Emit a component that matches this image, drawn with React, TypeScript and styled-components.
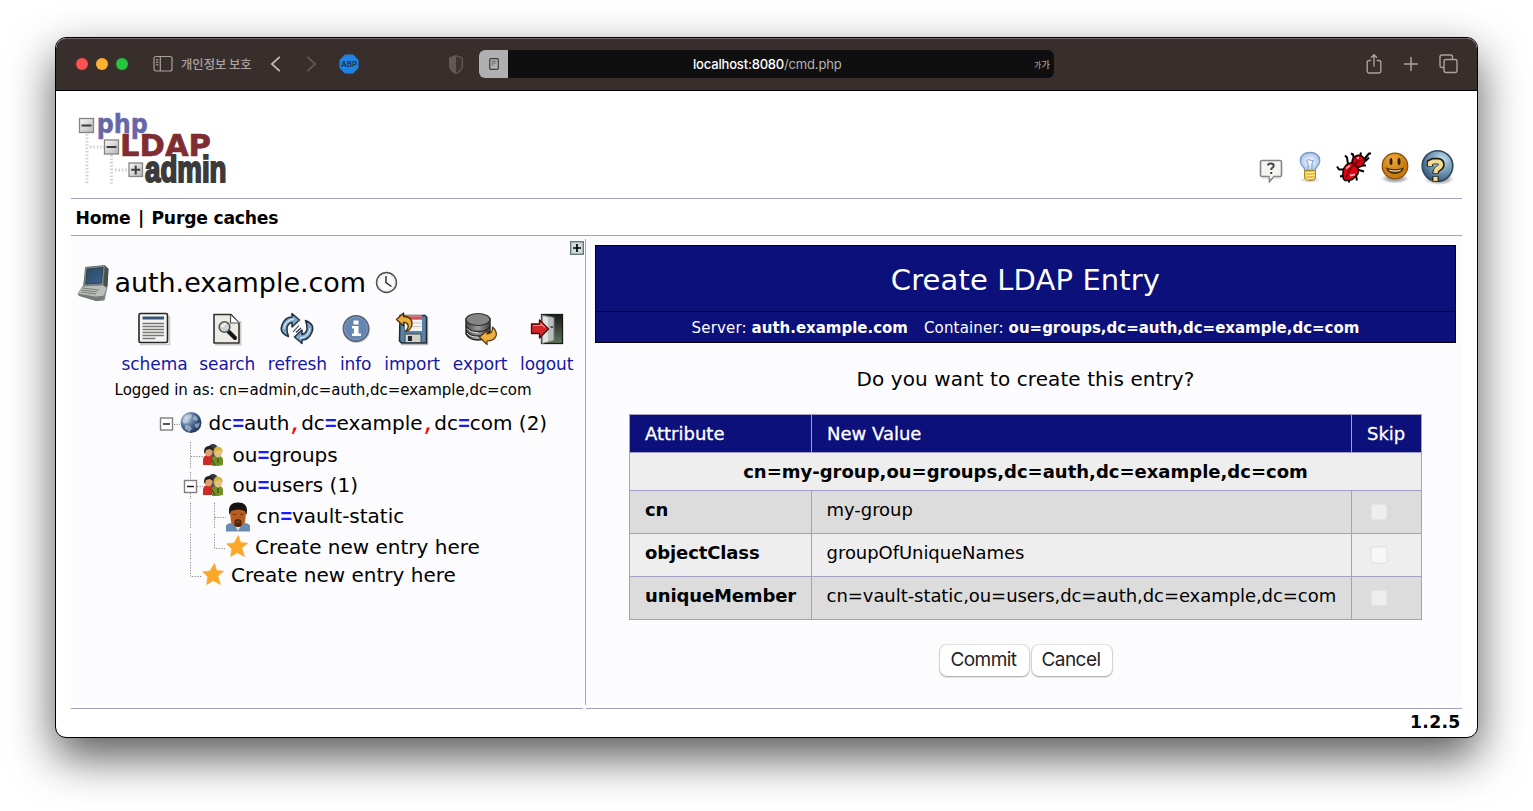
import React from 'react';
import styled, { createGlobalStyle } from 'styled-components';

const GlobalStyle = createGlobalStyle`
  * { box-sizing: border-box; }
  body { margin: 0; background: #fff; overflow: hidden; }
`;

const verdana = `Verdana, 'DejaVu Sans', sans-serif`;
const system = `Inter, 'Noto Sans CJK KR', sans-serif`;
const line = '#a2a0c6';
const navy = '#0c107a';

const Desktop = styled.div`
  height: 811px;
  padding: 37px 55px 0;
  font-family: ${verdana};
  color: #000;
`;

const Window = styled.main`
  width: 1423px;
  height: 701px;
  border: 1px solid #000;
  border-radius: 11px;
  overflow: hidden;
  background: #fff;
  box-shadow: 0 19px 46px rgba(0, 0, 0, 0.66);
`;

/* ---------- browser chrome ---------- */

const TitleBar = styled.header`
  display: flex;
  align-items: center;
  height: 53px;
  padding: 0 19px 0 20px;
  background: #382f2d;
  border-bottom: 1px solid #000;
  box-shadow: inset 0 1px 0 #6f6866;
  border-radius: 10px 10px 0 0;
  font-family: ${system};
`;

const Lights = styled.div`
  display: flex;
  gap: 8px;
  margin-right: 25px;
`;

const Light = styled.span<{ $color: string }>`
  width: 12px;
  height: 12px;
  border-radius: 50%;
  background: ${(p) => p.$color};
`;

const ProfileName = styled.span`
  width: 72px;
  margin: 0 17px 0 8px;
  font: 500 12.3px/18px 'Noto Sans CJK KR', sans-serif;
  color: #aaa2a0;
  white-space: nowrap;
`;

const Glyph = styled.svg<{ $ml?: number }>`
  display: block;
  flex: none;
  margin-left: ${(p) => p.$ml ?? 0}px;
  overflow: visible;
`;

const AddressBar = styled.div`
  display: flex;
  width: 575px;
  height: 28px;
  margin-left: 16px;
  border-radius: 6px;
  overflow: hidden;
  background: #0f0f0f;
`;

const ReaderTab = styled.div`
  display: grid;
  place-items: center;
  width: 29px;
  background: #b1b0b0;
`;

const Address = styled.div`
  flex: 1;
  padding-left: 185px;
  font-size: 13px;
  font-weight: 500;
  line-height: 29px;
  letter-spacing: -0.18px;
  color: #fff;
`;

const AddressPath = styled.span`
  color: #b4b4b4;
  font-weight: 400;
`;

const Translate = styled.div`
  padding-right: 4px;
  font: 500 9.5px/29px 'Noto Sans CJK KR', sans-serif;
  color: #a0a0a0;

  small { font-size: 7.5px; }
`;

const BarActions = styled.div`
  display: flex;
  align-items: center;
  margin-left: auto;
`;

/* ---------- page ---------- */

const Page = styled.div`
  padding: 0 15px;
`;

const Banner = styled.div`
  display: flex;
  justify-content: space-between;
  height: 108px;
  border-bottom: 1px solid ${line};
`;

const BannerIcons = styled.div`
  display: flex;
  align-items: flex-end;
  padding: 0 7px 13px 0;
`;

const Menu = styled.nav`
  display: flex;
  align-items: center;
  height: 37px;
  padding: 2px 0 0 4.6px;
  border-bottom: 1px solid ${line};
  font-size: 17.2px;
  font-weight: bold;
  letter-spacing: -0.22px;
  white-space: pre;
`;

const MenuSeparator = styled.span`
  width: 21px;
  text-align: center;
`;

const Panels = styled.div`
  display: grid;
  grid-template-columns: 514px 1px 876px;
  height: 469px;
`;

const Sidebar = styled.section`
  background: #fcfcfe;
`;

const Divider = styled.div`
  margin-top: 3px;
  background: ${line};
`;

const Expander = styled.div`
  display: flex;
  justify-content: flex-end;
  height: 24px;
  padding: 5px 1px 0 0;
`;

const ServerRow = styled.div`
  display: flex;
  align-items: center;
  height: 46px;
  padding-left: 6px;
`;

const ServerName = styled.h2`
  margin: 0 9px 0 3.5px;
  font-size: 27px;
  font-weight: normal;
  line-height: 32px;
  letter-spacing: -0.06px;
`;

const Toolbar = styled.div`
  display: flex;
  gap: 12px;
  height: 70px;
  padding: 6px 0 0 50.8px;
`;

const Tool = styled.a<{ $width: number }>`
  display: flex;
  flex-direction: column;
  align-items: center;
  width: ${(p) => p.$width}px;
  font-size: 17px;
  line-height: 37px;
  letter-spacing: -0.08px;
  color: #1616a6;
  white-space: nowrap;
`;

const LoginInfo = styled.p`
  height: 30px;
  margin: 0;
  padding-left: 43.6px;
  font-size: 15px;
  line-height: 28px;
  letter-spacing: -0.03px;
`;

const Tree = styled.div`
  padding-left: 85px;
  font-size: 20px;
`;

const TreeRow = styled.div<{ $height: number }>`
  display: flex;
  align-items: center;
  height: ${(p) => p.$height}px;
  line-height: 24px;
  white-space: nowrap;
`;

const TreeLabel = styled.span<{ $gap: number; $lift?: number }>`
  margin-left: ${(p) => p.$gap}px;
  padding-bottom: ${(p) => p.$lift ?? 0}px;
`;

const Mark = styled.b<{ $color: string }>`
  font-family: 'Liberation Mono', monospace;
  line-height: 1;
  letter-spacing: -0.3px;
  color: ${(p) => p.$color};
`;

const Main = styled.section`
  padding: 9px 0 0 9px;
  background: #fcfcfe;
`;

const TitleBox = styled.div`
  width: 861px;
  border: 1px solid #000;
  background: ${navy};
  color: #fff;
  text-align: center;
`;

const Title = styled.h1`
  height: 66px;
  margin: 0;
  padding-top: 2px;
  border-bottom: 1px solid #000;
  font-size: 29px;
  font-weight: normal;
  line-height: 65px;
  letter-spacing: 0.12px;
`;

const Subtitle = styled.div`
  display: flex;
  justify-content: center;
  gap: 16px;
  height: 30px;
  font-size: 15px;
  line-height: 32px;
`;

const SubtitleLabel = styled.span`
  letter-spacing: 0.16px;

  b { letter-spacing: -0.01px; }
`;

const Question = styled.p`
  width: 861px;
  height: 71px;
  margin: 0;
  font-size: 20px;
  line-height: 72px;
  letter-spacing: 0.08px;
  text-align: center;
`;

const EntryTable = styled.div`
  display: grid;
  grid-template-columns: 181px 539px 69px;
  grid-template-rows: 37px 37px 42px 42px 42px;
  gap: 1px;
  width: 793px;
  margin-left: 34px;
  padding: 1px;
  background: ${line};
  font-size: 18px;
`;

const HeadCell = styled.div`
  padding-left: 15px;
  background: ${navy};
  color: #fff;
  line-height: 37px;
  -webkit-text-stroke: 0.3px #fff;
`;

const DnCell = styled.div`
  grid-column: 1 / -1;
  background: #eee;
  font-weight: bold;
  line-height: 37px;
  text-align: center;
`;

const Cell = styled.div<{ $shade: string; $strong?: boolean }>`
  padding-left: ${(p) => (p.$strong ? 15 : 14.6)}px;
  background: ${(p) => p.$shade};
  font-weight: ${(p) => (p.$strong ? 'bold' : 'normal')};
  letter-spacing: ${(p) => (p.$strong ? -0.12 : -0.06)}px;
  line-height: 37px;
  white-space: nowrap;
`;

const SkipCell = styled(Cell)`
  display: flex;
  align-items: center;
  padding-left: 18px;
`;

const SkipBox = styled.span`
  width: 18px;
  height: 18px;
  border: 1px solid rgba(0, 0, 0, 0.08);
  border-radius: 4px;
  background: rgba(255, 255, 255, 0.5);
  box-shadow: inset 0 0 1px 1px rgba(0, 0, 0, 0.04);
`;

const Actions = styled.div`
  display: flex;
  justify-content: center;
  gap: 3px;
  width: 861px;
  margin-top: 25px;
`;

const PushButton = styled.button<{ $width: number }>`
  width: ${(p) => p.$width}px;
  height: 31px;
  padding: 0 1px 2px 0;
  border: 0;
  border-radius: 7px;
  background: #fff;
  box-shadow: 0 0 1px 0.5px rgba(0, 0, 0, 0.1), 0 1px 2px rgba(0, 0, 0, 0.3);
  color: #242424;
  font: 400 19px/28px ${system};
  letter-spacing: -0.55px;
`;

const FooterLines = styled.div`
  display: grid;
  grid-template-columns: 512px 876px;
  justify-content: space-between;
  padding-top: 3px;
`;

const FooterLine = styled.div`
  height: 1px;
  background: ${line};
`;

const Version = styled.footer`
  padding-right: 1.5px;
  font-size: 17.2px;
  font-weight: bold;
  line-height: 26px;
  letter-spacing: 0.3px;
  text-align: right;
`;

/* ---------- drawings ---------- */

const Logo = () => (
  <Glyph width="160" height="90" viewBox="70 100 160 90" style={{ marginTop: 9 }}>
    <defs>
      <linearGradient id="lg-box" x1="0" y1="0" x2="1" y2="1">
        <stop offset="0" stopColor="#fafafa" /><stop offset="1" stopColor="#b5b5b5" />
      </linearGradient>
    </defs>
    <g stroke="#d2d2d2" strokeWidth="3" strokeDasharray="1.6 1.8" fill="none">
      <path d="M86 134v50M110.500 155v29M89 147h14M114 170h14" />
    </g>
    <g fill="url(#lg-box)" stroke="#858585" strokeWidth="1.3">
      <rect x="78.500" y="118.500" width="14" height="14" />
      <rect x="103.500" y="140" width="14" height="14" />
      <rect x="128" y="163" width="13.500" height="13.500" />
    </g>
    <path d="M80.500 125.500h10M105.500 147h10M130.200 169.700h9M134.700 165.500v9" stroke="#3c3c3c" strokeWidth="2" />
    <g fontFamily="'DejaVu Sans', sans-serif" fontWeight="bold">
      <text x="95.800" y="132.500" fontSize="26" textLength="51" lengthAdjust="spacingAndGlyphs" fill="#6767a6" stroke="#6767a6" strokeWidth=".5">php</text>
      <text x="119" y="156" fontSize="30" textLength="91" lengthAdjust="spacingAndGlyphs" fill="#7f2d33" stroke="#7f2d33" strokeWidth=".6">LDAP</text>
    </g>
    <text x="144" y="182" fontSize="36" fontFamily="'Liberation Sans', sans-serif" fontWeight="bold" textLength="81.500" lengthAdjust="spacingAndGlyphs" fill="#3b3b3b" stroke="#3b3b3b" strokeWidth="2">admin</text>
  </Glyph>
);

const HintIcon = () => (
  <Glyph width="24" height="27" viewBox="0 0 24 27">
    <path d="M3 2.500h18q1.500 0 1.500 1.500v13q0 1.500-1.500 1.500h-6l-4.500 5-.5-5H3Q1.500 18.500 1.500 17V4Q1.500 2.500 3 2.500Z" fill="#f4f4f2" stroke="#858585" strokeWidth="1.6" />
    <path d="M3 20h7M14 20h8" stroke="#ccc" />
    <path d="M9 7.500q0-2 2.800-2 2.900 0 2.900 2.200 0 1.200-1.300 2.100-1.200.8-1.200 2.200M12.200 14v2" fill="none" stroke="#444" strokeWidth="2" />
  </Glyph>
);

const BulbIcon = () => (
  <Glyph $ml={15} width="24" height="35" viewBox="0 0 24 33">
    <defs>
      <radialGradient id="bulb"><stop offset="0" stopColor="#fff" /><stop offset="1" stopColor="#a9c3ec" /></radialGradient>
    </defs>
    <ellipse cx="12" cy="29" rx="9" ry="2.500" fill="#e4e4e4" />
    <path d="M7 20Q7 17 4 14.500 2.200 12 2.200 9.500 3 1.500 12 1.500t9.800 8q0 2.500-1.800 5Q17 17 17 20Z" fill="url(#bulb)" stroke="#7c9bcb" strokeWidth="1.300" />
    <path d="M10 19V12.500L8.500 9.500q2-1.500 3.500-.5 2 1.500 3.500.5l-1.500 3V19" fill="none" stroke="#7c9bcb" />
    <path d="M6.500 19.500h11v7q0 3-5.500 3t-5.500-3Z" fill="#e4bd45" stroke="#ac831f" />
    <path d="m7 22 10-1M7 25l10-1M8 28l8-1" stroke="#fff0ad" strokeWidth="1.200" />
  </Glyph>
);

const BugIcon = () => (
  <Glyph $ml={13} width="36" height="35" viewBox="0 0 36 34">
    <path d="M13 14 12 7l-2-2M19 9l-1-5-2-1M9 19H4l-2-3M9 25l-4 1M14 29v3M21 25l1 5M22 19l7 2M26 15h5M25 6l1-4M29 9l5-6h2M30 11l4-4" stroke="#000" strokeWidth="2" fill="none" strokeLinejoin="bevel" />
    <path d="M8 22q0-8 9-10 8 3 6 11-5 8-13 7-3-2-2-8Z" fill="#e00012" stroke="#100" strokeWidth="1.500" />
    <path d="M17 12q0-5 5-7 6-1 8 5-1 6-7 7Z" fill="#ce0010" stroke="#100" strokeWidth="1.500" />
    <path d="M11 27Q14 17 24 10" stroke="#400" strokeWidth="1.300" fill="none" />
    <path d="m11 18 4-3M15 25l5-1M22 8l2-1" stroke="#ff9b9b" strokeWidth="2" />
  </Glyph>
);

const SmileIcon = () => (
  <Glyph $ml={9} width="30" height="34" viewBox="0 0 30 34">
    <defs>
      <radialGradient id="smile" cx=".4" cy=".25"><stop offset="0" stopColor="#f0ab3c" /><stop offset="1" stopColor="#c97c12" /></radialGradient>
      <radialGradient id="smile-shade"><stop offset=".5" stopColor="#aaa" /><stop offset="1" stopColor="#fff" /></radialGradient>
    </defs>
    <ellipse cx="15" cy="27.500" rx="14" ry="5" fill="url(#smile-shade)" />
    <circle cx="15" cy="15" r="12.800" fill="url(#smile)" stroke="#7d4c0c" strokeWidth="1.200" />
    <ellipse cx="11" cy="10.500" rx="1.500" ry="3.500" fill="#2d1c03" />
    <ellipse cx="19" cy="10.500" rx="1.500" ry="3.500" fill="#2d1c03" />
    <path d="M6 16.500q9 3.500 18 0-1.500 6.500-9 6.500t-9-6.500Z" fill="#4d2e05" />
    <path d="M8.500 18.500q6.500 2 13 0l-1.500 1.500q-5 1.500-10 0Z" fill="#f6e7cd" />
  </Glyph>
);

const HelpIcon = () => (
  <Glyph $ml={10} width="35" height="36" viewBox="0 0 35 36">
    <defs>
      <radialGradient id="help" cx=".65" cy=".3" r=".8"><stop offset="0" stopColor="#c5e0ee" /><stop offset=".5" stopColor="#7399b5" /><stop offset="1" stopColor="#2c4c6c" /></radialGradient>
      <radialGradient id="help-shade"><stop offset=".5" stopColor="#aaa" /><stop offset="1" stopColor="#fff" /></radialGradient>
    </defs>
    <ellipse cx="19" cy="30" rx="15" ry="6" fill="url(#help-shade)" />
    <circle cx="17.500" cy="17" r="15.300" fill="url(#help)" stroke="#33495e" strokeWidth="1.600" />
    <path d="M10 17.500v-4l3-1.500h5q3.500.5 3.500 3.500 0 2.500-3 4-3 1.500-3 5M15.500 27.500v5" fill="none" stroke="#1e1b12" strokeWidth="6.400" />
    <path d="M10 17v-3l3-1.500h5q3 .5 3 3 0 2-2.500 3.500-3 1.500-3 5M15.500 28v4" fill="none" stroke="#f3dc91" strokeWidth="4.200" />
  </Glyph>
);

const ComputerIcon = () => (
  <Glyph width="34" height="38" viewBox="0 0 34 38">
    <defs>
      <linearGradient id="screen" x1="0" x2="1" y2="1"><stop stopColor="#2b4a5c" /><stop offset="1" stopColor="#3a6294" /></linearGradient>
    </defs>
    <path d="M9 3 28 1.500l3.500 3-1 18-3 14-8 .500L1 31l5-9Z" fill="#7e8783" />
    <path d="m8.500 3.500 19.500-2-2 19-19 1Z" fill="#8b9591" stroke="#69736f" />
    <path d="m10 5 16-1.500-1.700 15.500-15.500 1Z" fill="url(#screen)" stroke="#2d4350" />
    <path d="m28 2 3.500 3-1 17-4 4v-6Z" fill="#46514c" />
    <path d="m6 22 20-1 4 3-3 8-8 1L1 30Z" fill="#b9bfb9" stroke="#7b827d" strokeWidth=".800" />
    <path d="m1 30 18 3 8-1-1 4-7 1-17-5Z" fill="#747b76" />
    <path d="m6 24 16 2M5 26l15 2M4 28l15 2" stroke="#747d76" strokeWidth="1" />
  </Glyph>
);

const ClockIcon = () => (
  <Glyph width="24" height="24" viewBox="0 0 24 24">
    <circle cx="11.500" cy="11.500" r="10" fill="#f1f1f1" stroke="#4f4f4f" strokeWidth="1.400" />
    <circle cx="11.500" cy="11.500" r="8" fill="#fbfbfb" stroke="#bbb" strokeWidth=".8" strokeDasharray="1 3.200" />
    <path d="M11 5V11.500l5.500 4" fill="none" stroke="#333" strokeWidth="1.500" />
  </Glyph>
);

const SchemaIcon = () => (
  <Glyph width="34" height="34" viewBox="0 0 34 34">
    <path d="M3 32.500h29.500V4" fill="none" stroke="#ccc" strokeWidth="1.500" />
    <rect x="2" y="1.500" width="28.500" height="29" rx="1.500" fill="#f3f3f0" stroke="#252525" strokeWidth="1.600" />
    <path d="M5.500 6h21.500" stroke="#39537f" strokeWidth="3" />
    <path d="M5.500 11.500H27M5.500 14.500H27M5.500 17.500H27M5.500 20.500H27M5.500 23.500H27M5.500 26.500h13" stroke="#777" strokeWidth="1.300" />
  </Glyph>
);

const SearchIcon = () => (
  <Glyph width="34" height="34" viewBox="0 0 34 34">
    <path d="M5 32.500h25.500V9" fill="none" stroke="#ccc" strokeWidth="2" />
    <path d="M4 2.500h17l8 8.500v20H4Z" fill="#ecebe6" stroke="#34312d" strokeWidth="1.600" strokeLinejoin="round" />
    <path d="M20.500 3v8H29" fill="#fff" stroke="#56534e" strokeWidth="1.200" />
    <path d="m18.500 19.500 6.500 6.500" stroke="#171717" strokeWidth="4" strokeLinecap="round" />
    <circle cx="14.500" cy="15" r="5.300" fill="#cdd4d5" stroke="#55544f" strokeWidth="1.600" />
    <path d="m11.500 15 4-3.500" stroke="#fff" strokeWidth="1.500" />
  </Glyph>
);

const RefreshIcon = () => (
  <Glyph width="34" height="34" viewBox="0 0 34 34">
    <g fill="#7fa5c8" stroke="#23313d" strokeWidth="1.500" strokeLinejoin="round">
      <path d="M8.500 24.500Q-1 21 2 13q3-8 10-8V1.500L19.500 8 12 15v-4.500q-4 1-5 5-.5 4 1.500 9Z" />
      <path d="M25.500 8.500q9.500 3.500 6.500 11.500-3 8-10 8V31.500L14.500 25 22 18v4.500q4-1 5-5 .5-4-1.500-9Z" />
      <path d="m13 20 6-6.500M16 20.500l5-4.500" strokeWidth="1.100" />
    </g>
    <path d="M4 17q1-9 10-10M30 16q-1 9-10 10" fill="none" stroke="#d0e2f0" strokeWidth="1.300" />
  </Glyph>
);

const InfoIcon = () => (
  <Glyph width="34" height="34" viewBox="0 0 34 34">
    <ellipse cx="17.500" cy="18.500" rx="13.300" ry="12.500" fill="#c6c6c6" />
    <circle cx="17" cy="16.500" r="12.700" fill="#6586b0" stroke="#556275" strokeWidth="1.500" />
    <circle cx="17" cy="16.500" r="11.400" fill="none" stroke="#8ba3c4" strokeWidth=".7" />
    <path d="M14.500 8.500h5v4h-5ZM13 14h6.500v7.500H22V24h-9v-2.500h2V16.500h-2Z" fill="#fff" />
  </Glyph>
);

const ImportIcon = () => (
  <Glyph width="34" height="34" viewBox="0 0 34 34">
    <path d="M6 32.500h26.500V5" fill="none" stroke="#bbb" strokeWidth="1.500" />
    <path d="M5 3.500h25l1.500 1.500v26H6.500L4.500 29Z" fill="#5881a5" stroke="#202b34" strokeWidth="1.500" />
    <path d="M10 3.500h17V19H10Z" fill="#f5f3f2" />
    <path d="M10 4.200h17v3.500H10Z" fill="#d0545a" />
    <path d="M15 11h12M15 14.500h12" stroke="#c9c9c7" />
    <path d="M10 22h16v8.500H10Z" fill="#d1d1c9" stroke="#3d464d" />
    <path d="M13 24h4v5h-4Z" fill="#23292d" />
    <path d="m1.500 7.500 7-6.500v3.500q9 0 8.500 8-1 6-7 7 4-3 3-6.500-1-3-4.500-2.500v3.500Z" fill="#ecae3a" stroke="#493009" strokeWidth="1.300" strokeLinejoin="round" />
  </Glyph>
);

const ExportIcon = () => (
  <Glyph width="34" height="34" viewBox="0 0 34 34">
    <defs>
      <linearGradient id="disk"><stop stopColor="#494949" /><stop offset=".5" stopColor="#999" /><stop offset="1" stopColor="#444" /></linearGradient>
    </defs>
    <path d="M3 7v15q3 6 12 6t12-6V7Z" fill="url(#disk)" stroke="#242424" strokeWidth="1.400" />
    <ellipse cx="15" cy="7.500" rx="12" ry="6" fill="#858585" stroke="#303030" strokeWidth="1.200" />
    <path d="M3 14.500q3 5 12 5t12-5M3 19q3 5 12 5t12-5" fill="none" stroke="#262626" strokeWidth="1.300" />
    <path d="M4 16.500q3 4.200 11 4.200M4 21q3 4.200 11 4.200" fill="none" stroke="#ddd" />
    <path d="m16.500 25 7.500-6.500V22q6 0 5.500-7 5 4.500 3.500 9-2 5-9 5v3.500Z" fill="#edb142" stroke="#513709" strokeWidth="1.200" strokeLinejoin="round" />
  </Glyph>
);

const LogoutIcon = () => (
  <Glyph width="34" height="34" viewBox="0 0 34 34">
    <defs>
      <linearGradient id="door" y2="1" x2="0"><stop stopColor="#171b18" /><stop offset="1" stopColor="#5e7559" /></linearGradient>
    </defs>
    <rect x="11.500" y="2.500" width="21" height="29" fill="url(#door)" stroke="#191b19" strokeWidth="1.300" />
    <path d="m12 3 12 2.500v23l-12 3Z" fill="#b9bfbc" stroke="#777" />
    <path d="m13 4.500 5 1v24l-5 1Z" fill="#dfe3e0" />
    <path d="M20.500 15h2.500" stroke="#333" strokeWidth="1.500" />
    <path d="M1.500 12h8V8l9 9-9 9v-4.500h-8Z" fill="#d2262b" stroke="#4a080a" strokeWidth="1.300" strokeLinejoin="round" />
    <path d="M3 13.500h8v-2l4 4" fill="none" stroke="#f2837d" strokeWidth="1.200" />
  </Glyph>
);

const GlobeIcon = () => (
  <Glyph width="22" height="24" viewBox="0 0 22 24">
    <defs>
      <radialGradient id="globe" cx=".3" cy=".3" r=".8"><stop stopColor="#bdd0e2" /><stop offset=".5" stopColor="#4e6c98" /><stop offset="1" stopColor="#1b2d53" /></radialGradient>
    </defs>
    <circle cx="11" cy="10.500" r="10.500" fill="url(#globe)" />
    <path d="M4 5q5-4 8-2l-1 3-3 1 1 3-4 2-3-2ZM14 3l4 3-1 3-4-1ZM5 13l5 1 2 3-3 3-4-3ZM15 12l5-1-2 5-3-1Z" fill="#dde7ea" opacity=".5" />
  </Glyph>
);

const GroupIcon = () => (
  <Glyph width="21" height="24" viewBox="0 0 21 24">
    <circle cx="10" cy="4.500" r="4.500" fill="#333b40" />
    <path d="M7 7h7v8H7Z" fill="#4b565c" />
    <path d="M0 21v-5q0-4 4-5h3q3 1 3 5v5Z" fill="#cf2b25" />
    <ellipse cx="5.500" cy="7.500" rx="4" ry="5" fill="#dfa071" />
    <path d="M1 8q0-6 5-6 4 0 4 5L7 5 3 6 2 10Z" fill="#281e19" />
    <path d="M9 22v-6q0-4 4-4h4q3 1 3 4v5l-5 1Z" fill="#718f22" />
    <ellipse cx="15" cy="8.500" rx="4" ry="5" fill="#e7be84" />
    <path d="M10.500 9q0-6.500 4.500-6.500 4.500 0 5 6L17 6l-4 1-1 3Z" fill="#d4b63b" />
    <path d="m9 16 3 5M15 14v5" stroke="#2c3d17" />
  </Glyph>
);

const PersonIcon = () => (
  <Glyph width="24" height="30" viewBox="0 0 24 30">
    <path d="M0 29.500v-5.500q0-2 5-3l7 1 7-1q5 1 5 3v5.500Z" fill="#688bb4" />
    <path d="m8 22 4 7 4-7Z" fill="#d9e3ec" />
    <path d="M4 11Q3 1 12 1t8 10l-1 9q-3 5-7 5t-7-5Z" fill="#b75c1e" />
    <path d="M3.500 13Q1 0 12 .500 23 0 20.500 13L19 9q-7-3-14 0Z" fill="#171312" />
    <path d="M7 12.500h3M14 12.500h3" stroke="#6b3513" strokeWidth="1.200" />
    <path d="M8.500 24v-5.500q3.500-3 7 0V24q-3.500 2-7 0Z" fill="#4c2810" />
    <path d="M10.500 19.800h3" stroke="#a45e35" />
  </Glyph>
);

const StarIcon = () => (
  <Glyph width="22" height="24" viewBox="0 0 22 24">
    <path d="M12.500.300 14.600 7.500l7.100.700-5.800 4.800 2.600 8.500-7.400-3.800-6.500 3.900 1.100-7.800L.600 8.800l7.400-.900Z" fill="#fba72a" stroke="#f6ae44" strokeWidth=".7" />
  </Glyph>
);

type GuideProps = { width: number; height: number; dots: string; box?: [number, number] };

const Guide = ({ width, height, dots, box }: GuideProps) => (
  <Glyph width={width} height={height} viewBox={`0 0 ${width} ${height}`}>
    <path d={dots} fill="none" stroke="#858585" strokeDasharray="1.200 1.450" />
    {box && (
      <>
        <rect x={box[0]} y={box[1]} width="12" height="12" fill="#fff" stroke="#808080" strokeWidth="1.400" />
        <path d={`M${box[0] + 2.5} ${box[1] + 6}h7`} stroke="#111" strokeWidth="1.400" />
      </>
    )}
  </Glyph>
);

const Eq = () => <Mark $color="#1a1aff">=</Mark>;
const Comma = () => <Mark $color="#ff0000">,</Mark>;

const tools = [
  { name: 'schema', width: 65.4, Icon: SchemaIcon },
  { name: 'search', width: 56.1, Icon: SearchIcon },
  { name: 'refresh', width: 60.4, Icon: RefreshIcon },
  { name: 'info', width: 32, Icon: InfoIcon },
  { name: 'import', width: 56.8, Icon: ImportIcon },
  { name: 'export', width: 55.4, Icon: ExportIcon },
  { name: 'logout', width: 53.6, Icon: LogoutIcon },
];

const attributes = [
  { name: 'cn', value: 'my-group' },
  { name: 'objectClass', value: 'groupOfUniqueNames' },
  { name: 'uniqueMember', value: 'cn=vault-static,ou=users,dc=auth,dc=example,dc=com' },
];

const Chrome = () => (
  <TitleBar>
    <Lights>
      <Light $color="#ff5052" />
      <Light $color="#fdb12e" />
      <Light $color="#28c33f" />
    </Lights>
    <Glyph width="20" height="18" viewBox="0 0 20 18" fill="none" stroke="#aaa2a0" strokeWidth="1.200">
      <rect x="1" y="1.500" width="18" height="14.500" rx="2" />
      <path d="M7.300 1.500V16M3 4.800h2.300M3 7.300h2.300M3 9.800h2.300" />
    </Glyph>
    <ProfileName>개인정보 보호</ProfileName>
    <Glyph width="12" height="18" viewBox="0 0 12 18" fill="none" stroke="#c5bebc" strokeWidth="1.700">
      <path d="M9.800 1.800 1.800 9l8 7.200" />
    </Glyph>
    <Glyph $ml={24} width="12" height="18" viewBox="0 0 12 18" fill="none" stroke="#625957" strokeWidth="1.700">
      <path d="M1.200 1.800 9.200 9l-8 7.200" />
    </Glyph>
    <Glyph $ml={21} width="20" height="20" viewBox="0 0 20 20">
      <path d="M6 .500h8L19.500 6v8L14 19.500H6L.500 14V6Z" fill="#1f83e4" />
      <text x="10" y="12.600" fontSize="8" fontWeight="600" textAnchor="middle" textLength="16" lengthAdjust="spacingAndGlyphs" fill="#292d3c" fontFamily="Inter, sans-serif">ABP</text>
    </Glyph>
    <Glyph $ml={90} width="14" height="19" viewBox="0 0 14 19">
      <path d="M7 .800 13.400 3v8q0 4.500-6.400 7.500Q.600 15.500.600 11V3Z" fill="#3d3432" stroke="#625957" strokeWidth="1.300" />
      <path d="M7 .800V18.500Q.600 15.500.600 11V3Z" fill="#625957" />
    </Glyph>
    <AddressBar>
      <ReaderTab>
        <Glyph width="10" height="12" viewBox="0 0 10 12" fill="none" stroke="#3e3e3e">
          <rect x=".7" y=".7" width="8.600" height="10.600" rx="1" strokeWidth="1.200" />
          <path d="M2.500 3.300h5M2.500 5.200h4M2.500 7h2" stroke="#666" />
        </Glyph>
      </ReaderTab>
      <Address>
        localhost:8080<AddressPath>/cmd.php</AddressPath>
      </Address>
      <Translate><small>가</small>가</Translate>
    </AddressBar>
    <BarActions>
      <Glyph width="16" height="21" viewBox="0 0 16 21" fill="none" stroke="#aaa2a0" strokeWidth="1.400">
        <path d="M5.200 6.500H3Q1.200 6.500 1.200 8.300v9Q1.200 19 3 19h10q1.800 0 1.800-1.700v-9Q14.800 6.500 13 6.500h-2.200M8 12.500V1M5 3.800l3-3 3 3" />
      </Glyph>
      <Glyph $ml={21} width="16" height="16" viewBox="0 0 16 16" stroke="#aaa2a0" strokeWidth="1.500">
        <path d="M8 1v14M1 8h14" />
      </Glyph>
      <Glyph $ml={20} width="19" height="20" viewBox="0 0 19 20" fill="none" stroke="#aaa2a0" strokeWidth="1.400">
        <rect x="5" y="5.500" width="13" height="13" rx="2" />
        <path d="M5 13.500H3q-2 0-2-2V3q0-2 2-2h8.500q2 0 2 2v2.500" />
      </Glyph>
    </BarActions>
  </TitleBar>
);

const NavTree = () => (
  <Tree>
    <TreeRow $height={35}>
      <Guide width={24} height={35} dots="M18 18.500h6" box={[4.5, 12]} />
      <GlobeIcon />
      <TreeLabel $gap={6.6} $lift={1}>
        dc<Eq />auth<Comma />dc<Eq />example<Comma />dc<Eq />com (2)
      </TreeLabel>
    </TreeRow>
    <TreeRow $height={30}>
      <Guide width={47} height={30} dots="M34.500 1v27M35 15.500h12" />
      <GroupIcon />
      <TreeLabel $gap={8.6} $lift={2}>ou<Eq />groups</TreeLabel>
    </TreeRow>
    <TreeRow $height={30}>
      <Guide width={47} height={30} dots="M34.500 1v27M41 15.500h6" box={[28.5, 9.5]} />
      <GroupIcon />
      <TreeLabel $gap={8.6} $lift={2}>ou<Eq />users (1)</TreeLabel>
    </TreeRow>
    <TreeRow $height={31}>
      <Guide width={70} height={31} dots="M34.500 2v26M58.500 2v26M59 16.500h11" />
      <PersonIcon />
      <TreeLabel $gap={6.6} $lift={1}>cn<Eq />vault-static</TreeLabel>
    </TreeRow>
    <TreeRow $height={29}>
      <Guide width={70} height={29} dots="M34.500 2v26M58.500 2v14.500h12" />
      <StarIcon />
      <TreeLabel $gap={7}>Create new entry here</TreeLabel>
    </TreeRow>
    <TreeRow $height={28}>
      <Guide width={46} height={28} dots="M34.500 1v14.500h12" />
      <StarIcon />
      <TreeLabel $gap={7}>Create new entry here</TreeLabel>
    </TreeRow>
  </Tree>
);

export default function App() {
  return (
    <Desktop>
      <GlobalStyle />
      <Window>
        <Chrome />
        <Page>
          <Banner>
            <Logo />
            <BannerIcons>
              <HintIcon />
              <BulbIcon />
              <BugIcon />
              <SmileIcon />
              <HelpIcon />
            </BannerIcons>
          </Banner>
          <Menu>
            <span>Home</span>
            <MenuSeparator>|</MenuSeparator>
            <span>Purge caches</span>
          </Menu>
          <Panels>
            <Sidebar>
              <Expander>
                <Glyph width="14" height="14" viewBox="0 0 14 14">
                  <rect x=".7" y=".7" width="12.600" height="12.600" fill="#cfdcdc" stroke="#66797c" strokeWidth="1.400" />
                  <path d="M7 3v8M3 7h8" stroke="#000" strokeWidth="1.700" />
                </Glyph>
              </Expander>
              <ServerRow>
                <ComputerIcon />
                <ServerName>auth.example.com</ServerName>
                <ClockIcon />
              </ServerRow>
              <Toolbar>
                {tools.map(({ name, width, Icon }) => (
                  <Tool key={name} $width={width}>
                    <Icon />
                    {name}
                  </Tool>
                ))}
              </Toolbar>
              <LoginInfo>Logged in as: cn=admin,dc=auth,dc=example,dc=com</LoginInfo>
              <NavTree />
            </Sidebar>
            <Divider />
            <Main>
              <TitleBox>
                <Title>Create LDAP Entry</Title>
                <Subtitle>
                  <SubtitleLabel>Server: <b>auth.example.com</b></SubtitleLabel>
                  <SubtitleLabel>Container: <b>ou=groups,dc=auth,dc=example,dc=com</b></SubtitleLabel>
                </Subtitle>
              </TitleBox>
              <Question>Do you want to create this entry?</Question>
              <EntryTable>
                <HeadCell>Attribute</HeadCell>
                <HeadCell>New Value</HeadCell>
                <HeadCell>Skip</HeadCell>
                <DnCell>cn=my-group,ou=groups,dc=auth,dc=example,dc=com</DnCell>
                {attributes.map(({ name, value }, i) => {
                  const shade = i % 2 ? '#eeeeee' : '#dcdcdc';
                  return (
                    <React.Fragment key={name}>
                      <Cell $shade={shade} $strong>{name}</Cell>
                      <Cell $shade={shade}>{value}</Cell>
                      <SkipCell $shade={shade}><SkipBox /></SkipCell>
                    </React.Fragment>
                  );
                })}
              </EntryTable>
              <Actions>
                <PushButton $width={89}>Commit</PushButton>
                <PushButton $width={80}>Cancel</PushButton>
              </Actions>
            </Main>
          </Panels>
          <FooterLines>
            <FooterLine />
            <FooterLine />
          </FooterLines>
          <Version>1.2.5</Version>
        </Page>
      </Window>
    </Desktop>
  );
}
